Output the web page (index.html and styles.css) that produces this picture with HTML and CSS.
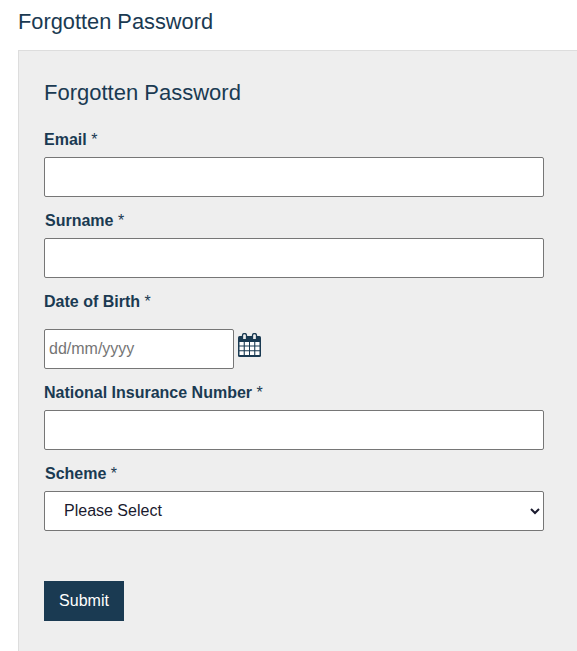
FILE: index.html
```html
<!DOCTYPE html>
<html lang="en">
<head>
  <meta charset="UTF-8">
  <meta name="viewport" content="width=device-width, initial-scale=1.0">
  <title>Forgotten Password</title>
  <link rel="stylesheet" href="styles.css">
</head>
<body>
  <h1 class="page-title">Forgotten Password</h1>

  <div class="panel">
    <h2 class="panel-title">Forgotten Password</h2>
    <form class="form">
      <div class="field">
        <label for="email">Email <span class="req">*</span></label>
        <input type="text" id="email">
      </div>
      <div class="field shifted">
        <label for="surname">Surname <span class="req">*</span></label>
        <input type="text" id="surname">
      </div>
      <div class="field">
        <label class="dob-label" for="dob">Date of Birth <span class="req">*</span></label>
        <div class="date-row">
          <input type="text" id="dob" class="date-input" placeholder="dd/mm/yyyy">
          <svg class="cal-icon" width="23" height="24" viewBox="0 0 23 24" aria-hidden="true">
            <rect x="0" y="3" width="23" height="21" rx="1.5" fill="#1a3a52"/>
            <path d="M4.5 6V2.5a2 2 0 0 1 4 0V6M14.5 6V2.5a2 2 0 0 1 4 0V6" fill="#eee" stroke="#1a3a52" stroke-width="1.3"/>
            <path d="M1.5 9h4.2v3.6H1.5zM6.8 9h4.2v3.6H6.8zM12 9h4.2v3.6H12zM17.3 9h4.2v3.6h-4.2zM1.5 13.6h4.2v3.6H1.5zM6.8 13.6h4.2v3.6H6.8zM12 13.6h4.2v3.6H12zM17.3 13.6h4.2v3.6h-4.2zM1.5 18.2h4.2v3.8H1.5zM6.8 18.2h4.2v3.8H6.8zM12 18.2h4.2v3.8H12zM17.3 18.2h4.2v3.8h-4.2z" fill="#fff"/>
          </svg>
        </div>
      </div>
      <div class="field">
        <label for="nino">National Insurance Number <span class="req">*</span></label>
        <input type="text" id="nino">
      </div>
      <div class="field shifted">
        <label for="scheme">Scheme <span class="req">*</span></label>
        <select id="scheme">
          <option>Please Select</option>
        </select>
      </div>
      <button type="button" class="submit">Submit</button>
    </form>
  </div>
</body>
</html>
```
FILE: styles.css
```css
html, body {
  overflow: hidden;
}

body {
  margin: 0;
  height: 651px;
  background-color: #fff;
  color: #1a3a52;
  font-family: "Liberation Sans", Arial, sans-serif;
  font-size: 16px;
}

.page-title {
  margin: 0;
  padding: 10px 0 0 18px;
  height: 50px;
  box-sizing: border-box;
  font-size: 21.8px;
  line-height: 24px;
  font-weight: 400;
}

.panel {
  margin-left: 18px;
  height: 601px;
  box-sizing: border-box;
  padding: 29px 33px 0 25px;
  background-color: #eee;
  border-top: 1px solid #ddd;
  border-left: 1px solid #ddd;
}

.panel-title {
  margin: 0 0 23px;
  font-size: 22px;
  line-height: 26px;
  font-weight: 400;
}

.field {
  margin-bottom: 13px;
}

label {
  display: block;
  padding-top: 1px;
  margin-bottom: 7px;
  font-weight: 700;
  line-height: 20px;
}

.shifted label {
  margin-left: 1px;
}

.dob-label {
  margin-bottom: 17px;
}

.req {
  font-weight: 400;
}

input, select {
  display: block;
  width: 500px;
  height: 40px;
  box-sizing: border-box;
  border: 1px solid #767676;
  border-radius: 2px;
  background-color: #fff;
  color: #1a1a2e;
  font-family: inherit;
  font-size: 16px;
}

input {
  padding: 0 4px;
}

select {
  padding: 0 15px 2px;
}

.date-row {
  display: flex;
  align-items: flex-start;
  gap: 4px;
}

.date-input {
  width: 190px;
}

.date-input::placeholder {
  color: #757575;
}

.cal-icon {
  margin-top: 4px;
}

.submit {
  display: block;
  margin-top: 50px;
  width: 80px;
  height: 40px;
  border: 0;
  background-color: #1a3a52;
  color: #fff;
  font-family: inherit;
  font-size: 16px;
  cursor: pointer;
}
```
